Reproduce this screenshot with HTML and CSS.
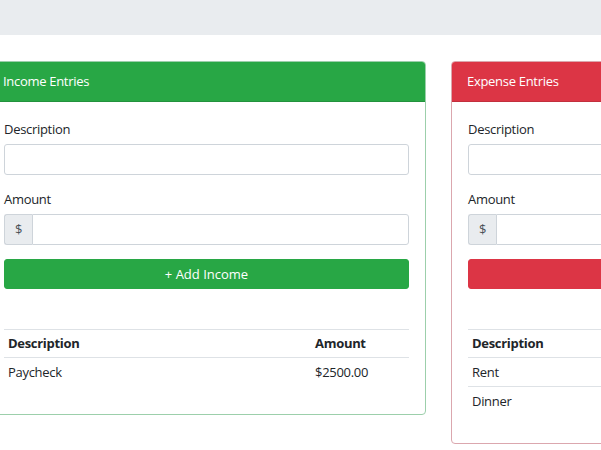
FILE: index.html
```html
<!DOCTYPE html>
<html>
<head>
<meta charset="utf-8">
<link rel="stylesheet" href="styles.css">
</head>
<body>
<div class="topbar"></div>
<main class="cards">
  <section class="card card-income">
    <div class="card-header">Income Entries</div>
    <div class="card-body">
      <form class="entry-form">
        <div class="form-group">
          <label class="label">Description</label>
          <input class="input" type="text">
        </div>
        <div class="form-group">
          <label class="label">Amount</label>
          <div class="input-group">
            <span class="addon">$</span>
            <input class="input input-joined" type="text">
          </div>
        </div>
        <button type="button" class="btn btn-income">+ Add Income</button>
      </form>
      <table class="table">
        <thead>
          <tr><th>Description</th><th class="col-amount">Amount</th></tr>
        </thead>
        <tbody>
          <tr><td>Paycheck</td><td>$2500.00</td></tr>
        </tbody>
      </table>
    </div>
  </section>
  <section class="card card-expense">
    <div class="card-header">Expense Entries</div>
    <div class="card-body">
      <form class="entry-form">
        <div class="form-group">
          <label class="label">Description</label>
          <input class="input" type="text">
        </div>
        <div class="form-group">
          <label class="label">Amount</label>
          <div class="input-group">
            <span class="addon">$</span>
            <input class="input input-joined" type="text">
          </div>
        </div>
        <button type="button" class="btn btn-expense">+ Add Expense</button>
      </form>
      <table class="table">
        <thead>
          <tr><th>Description</th><th class="col-amount">Amount</th></tr>
        </thead>
        <tbody>
          <tr><td>Rent</td><td>$1200.00</td></tr>
          <tr><td>Dinner</td><td>$45.00</td></tr>
        </tbody>
      </table>
    </div>
  </section>
</main>
</body>
</html>
```
FILE: styles.css
```css
html, body {
  margin: 0;
  padding: 0;
  overflow: hidden;
  background: #fff;
}
body {
  font-family: "Open Sans", "Noto Sans", sans-serif;
  font-size: 13px;
  letter-spacing: -0.3px;
  line-height: 1.5;
  color: #212529;
  width: 601px;
  height: 450px;
}
.topbar {
  height: 35px;
  background: #e9ecef;
}
.cards {
  display: flex;
  gap: 25px;
  margin-top: 26px;
  margin-left: -13px;
  align-items: flex-start;
}
.card {
  flex: 0 0 439px;
  box-sizing: border-box;
  border: 1px solid;
  border-radius: 4px;
  overflow: hidden;
}
.card-income { border-color: #9ccfab; }
.card-expense { border-color: #dba7ae; }
.card-header {
  box-sizing: border-box;
  height: 41px;
  padding: 2px 16px 0;
  display: flex;
  align-items: center;
  color: #fff;
  margin: -1px -1px 0;
}
.card-income .card-header { background: #28a745; border-bottom: 1px solid #23923d; }
.card-expense .card-header { background: #dc3545; border-bottom: 1px solid #c22f3d; }
.card-body {
  padding: 16px 16px 16px;
}
.entry-form {
  display: flex;
  flex-direction: column;
  margin-bottom: 40px;
}
.form-group {
  display: flex;
  flex-direction: column;
  margin-bottom: 13px;
}
.label {
  display: block;
  margin-top: -1px;
  padding-top: 3px;
  line-height: 19px;
  margin-bottom: 5px;
}
.input {
  box-sizing: border-box;
  height: 31px;
  border: 1px solid #ced4da;
  border-radius: 3px;
  padding: 0 10px;
  font: inherit;
  background: #fff;
  width: 100%;
  outline: none;
}
.input-group {
  display: flex;
  height: 31px;
}
.addon {
  box-sizing: border-box;
  width: 28px;
  flex: 0 0 28px;
  display: flex;
  align-items: center;
  justify-content: center;
  background: #e9ecef;
  border: 1px solid #ced4da;
  border-right: none;
  border-radius: 3px 0 0 3px;
  color: #495057;
}
.input-joined {
  flex: 1;
  border-radius: 0 3px 3px 0;
}
.btn {
  box-sizing: border-box;
  height: 30px;
  margin-top: 1px;
  padding-top: 2px;
  border: 1px solid transparent;
  border-radius: 3px;
  color: #fff;
  font: inherit;
  width: 100%;
  cursor: pointer;
}
.btn-income { background: #28a745; border-color: #28a745; }
.btn-expense { background: #dc3545; border-color: #dc3545; }
.table {
  width: 100%;
  border-collapse: collapse;
  margin-bottom: 12px;
}
.table th,
.table td {
  text-align: left;
  padding: 4px 4px;
  border-top: 1px solid #dee2e6;
  height: 20px;
  line-height: 20px;
}
.table th {
  font-weight: 700;
  height: 19px;
  line-height: 19px;
}
.table thead th {
  border-bottom: 1px solid #dee2e6;
}
.col-amount {
  width: 90px;
}
```
